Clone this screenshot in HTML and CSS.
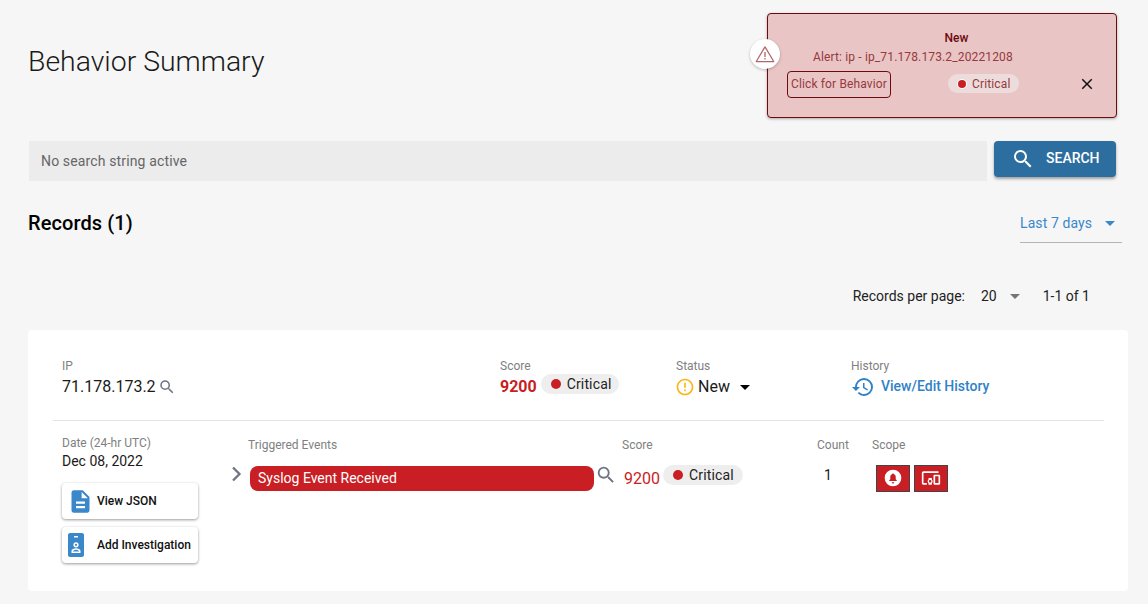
FILE: index.html
```html
<!DOCTYPE html>
<html lang="en">
<head>
<meta charset="utf-8">
<title>Behavior Summary</title>
<link rel="stylesheet" href="styles.css">
</head>
<body>
<main class="page">
  <h1 class="title">Behavior Summary</h1>

  <div class="search-row">
    <div class="search-field">No search string active</div>
    <button class="search-btn">
      <svg class="search-btn-icon" viewBox="0 0 24 24"><path d="M15.5 14h-.79l-.28-.27A6.47 6.47 0 0 0 16 9.5 6.5 6.5 0 1 0 9.5 16c1.61 0 3.09-.59 4.23-1.57l.27.28v.79l5 4.99L20.49 19l-4.99-5zm-6 0C7.01 14 5 11.99 5 9.5S7.01 5 9.5 5 14 7.01 14 9.5 11.99 14 9.5 14z"/></svg>
      <span>SEARCH</span>
    </button>
  </div>

  <div class="records-head">
    <h2 class="records-title">Records (1)</h2>
    <div class="range-select">
      <span>Last 7 days</span>
      <i class="caret caret-blue"></i>
    </div>
  </div>

  <div class="pager">
    <span>Records per page:</span>
    <span class="pager-num">20</span>
    <i class="caret caret-grey"></i>
    <span class="pager-range">1-1 of 1</span>
  </div>

  <section class="card">
    <div class="summary">
      <div class="cell">
        <div class="label">IP</div>
        <div class="value">71.178.173.2
          <svg class="mag mag-sm" viewBox="0 0 24 24"><path d="M15.5 14h-.79l-.28-.27A6.47 6.47 0 0 0 16 9.5 6.5 6.5 0 1 0 9.5 16c1.61 0 3.09-.59 4.23-1.57l.27.28v.79l5 4.99L20.49 19l-4.99-5zm-6 0C7.01 14 5 11.99 5 9.5S7.01 5 9.5 5 14 7.01 14 9.5 11.99 14 9.5 14z"/></svg>
        </div>
      </div>
      <div class="cell">
        <div class="label">Score</div>
        <div class="value">
          <strong class="score">9200</strong>
          <span class="chip"><i class="dot"></i>Critical</span>
        </div>
      </div>
      <div class="cell">
        <div class="label">Status</div>
        <div class="value status">
          <svg class="status-icon" viewBox="0 0 24 24"><path d="M11 15h2v2h-2zm0-8h2v6h-2zm.99-5C6.47 2 2 6.48 2 12s4.47 10 9.99 10C17.52 22 22 17.52 22 12S17.52 2 11.99 2zM12 20c-4.42 0-8-3.58-8-8s3.58-8 8-8 8 3.58 8 8-3.58 8-8 8z"/></svg>
          <span>New</span>
          <i class="caret caret-black"></i>
        </div>
      </div>
      <div class="cell">
        <div class="label">History</div>
        <div class="value history">
          <svg class="history-icon" viewBox="0 0 24 24"><path d="M13 3a9 9 0 0 0-9 9H1l3.89 3.89.07.14L9 12H6c0-3.87 3.13-7 7-7s7 3.13 7 7-3.13 7-7 7c-1.93 0-3.68-.79-4.94-2.06l-1.42 1.42A8.954 8.954 0 0 0 13 21a9 9 0 0 0 0-18zm-1 5v5l4.28 2.54.72-1.21-3.5-2.08V8H12z"/></svg>
          <span class="history-text">View/Edit History</span>
        </div>
      </div>
    </div>

    <div class="detail">
      <div class="date-col">
        <div class="label">Date (24-hr UTC)</div>
        <div class="date">Dec 08, 2022</div>
        <button class="action action-first">
          <svg class="action-icon icon-doc" viewBox="0 0 24 24"><path d="M14 2H6c-1.1 0-2 .9-2 2v16c0 1.1.9 2 2 2h12c1.1 0 2-.9 2-2V8l-6-6zm2 16H8v-2h8v2zm0-4H8v-2h8v2zm-3-5V3.500L18.500 9H13z"/></svg>
          <span class="action-text-doc">View JSON</span>
        </button>
        <button class="action">
          <svg class="action-icon icon-badge" viewBox="0 0 24 24"><path fill-rule="evenodd" d="M6 0h12c1.100 0 2 .9 2 2v20c0 1.100-.9 2-2 2H6c-1.100 0-2-.9-2-2V2c0-1.100.9-2 2-2zm4 3v1.400h4V3h-4zm2 6.200a2.600 2.600 0 1 0 0 5.200a2.600 2.600 0 0 0 0-5.200zm0 1.500a1.100 1.100 0 1 1 0 2.200a1.100 1.100 0 0 1 0-2.200zM7.500 20h9v-2c0-1.800-2.800-2.700-4.500-2.700s-4.500.9-4.500 2.700v2zm1.600-1.500v-.5c.4-.6 1.800-1.200 2.900-1.200s2.500.6 2.900 1.200v.5H9.100z"/></svg>
          <span class="action-text-badge">Add Investigation</span>
        </button>
      </div>

      <div class="events">
        <div class="events-head">
          <div class="label">Triggered Events</div>
          <div class="label">Score</div>
          <div class="label label-count">Count</div>
          <div class="label">Scope</div>
        </div>
        <div class="event-row">
          <svg class="chevron" viewBox="0 0 12 16"><path d="M2 1.500 8.500 8 2 14.500" fill="none" stroke="#6f7484" stroke-width="2.300"/></svg>
          <div class="event-pill">Syslog Event Received</div>
          <svg class="mag mag-lg" viewBox="0 0 24 24"><path d="M15.500 14h-.79l-.28-.27A6.470 6.470 0 0 0 16 9.500 6.500 6.500 0 1 0 9.500 16c1.610 0 3.090-.59 4.230-1.570l.27.28v.79l5 4.990L20.490 19l-4.990-5zm-6 0C7.010 14 5 11.990 5 9.500S7.010 5 9.500 5 14 7.010 14 9.500 11.990 14 9.500 14z"/></svg>
          <span class="event-score">9200</span>
          <span class="chip chip-event"><i class="dot"></i>Critical</span>
          <span class="event-count">1</span>
          <span class="scope-box scope-first">
            <svg class="scope-icon" viewBox="0 0 24 24"><path fill-rule="evenodd" d="M12 2a10 10 0 1 1 0 20a10 10 0 0 1 0-20zm0 16.500c.800 0 1.500-.7 1.500-1.500h-3c0 .8.700 1.500 1.500 1.500zm4.500-3v-.7l-1.200-1.200v-2.800c0-1.800-1-3.100-2.600-3.500v-.4a.7.7 0 0 0-1.400 0v.4c-1.600.4-2.600 1.700-2.600 3.500v2.800l-1.200 1.200v.7h9z"/></svg>
          </span>
          <span class="scope-box">
            <svg class="scope-icon" viewBox="0 0 24 24"><path d="M3 6h18V4H3c-1.100 0-2 .9-2 2v12c0 1.100.9 2 2 2h4v-2H3V6zm10 6H9v1.780c-.61.55-1 1.330-1 2.220s.39 1.670 1 2.220V20h4v-1.780c.61-.55 1-1.340 1-2.220s-.39-1.670-1-2.220V12zm-2 5.500c-.83 0-1.500-.67-1.500-1.500s.67-1.500 1.500-1.500 1.500.67 1.500 1.500-.67 1.500-1.500 1.500zM22 8h-6c-.5 0-1 .5-1 1v10c0 .5.5 1 1 1h6c.5 0 1-.5 1-1V9c0-.5-.5-1-1-1zm-1 10h-4v-8h4v8z"/></svg>
          </span>
        </div>
      </div>
    </div>
  </section>
</main>

<aside class="toast">
  <span class="toast-badge">
    <svg class="toast-warn" viewBox="0 0 24 24"><path class="toast-warn-line" d="M12 3.500 22.500 21h-21z"/><path class="toast-warn-mark" d="M11.200 9.500h1.600v6h-1.600zm0 7.300h1.600v1.700h-1.600z"/></svg>
  </span>
  <div class="toast-title">New</div>
  <div class="toast-msg">Alert: ip - ip_71.178.173.2_20221208</div>
  <div class="toast-actions">
    <span class="toast-link">Click for Behavior</span>
    <span class="chip chip-toast"><i class="dot dot-ring"></i>Critical</span>
    <svg class="toast-close" viewBox="0 0 24 24"><path d="M19 6.410 17.590 5 12 10.590 6.410 5 5 6.410 10.590 12 5 17.590 6.410 19 12 13.410 17.590 19 19 17.590 13.410 12z"/></svg>
  </div>
</aside>
</body>
</html>
```

FILE: styles.css
```css
* { box-sizing: border-box; }
html, body { margin: 0; height: 100%; }
body {
  background: #f6f6f6;
  color: #000;
  font-family: Roboto, "Liberation Sans", sans-serif;
  overflow: hidden;
  position: relative;
}
.page { padding: 44px 20px 0 28px; }
.title {
  margin: 0;
  font-size: 28.4px;
  font-weight: 300;
  line-height: 36px;
  color: #1a1a1a;
}
.search-row { display: flex; gap: 7px; margin-top: 61px; padding-left: 1px; padding-right: 12px; align-items: flex-start; }
.search-field {
  flex: 1;
  height: 40px;
  background: #ececec;
  color: #666;
  font-size: 14px;
  line-height: 40px;
  padding-left: 12px;
  letter-spacing: .14px;
}
.search-btn {
  width: 122px;
  height: 36px;
  display: flex;
  align-items: center;
  padding: 0 0 0 17px;
  gap: 12px;
  background: #2c6e9f;
  color: #fff;
  border: 0;
  border-radius: 4px;
  font: 500 14px Roboto, sans-serif;
  box-shadow: 0 2px 3px rgba(0,0,0,.35);
}
.search-btn span { margin: -2px 0 0 -1px; }
.search-btn-icon { width: 24px; height: 24px; fill: #fff; }
.records-head { display: flex; justify-content: space-between; margin-top: 24px; height: 38px; padding-right: 6px; }
.records-title { margin: 0; font-size: 20px; font-weight: 500; line-height: 36px; letter-spacing: .1px; }
.range-select {
  width: 102px;
  height: 38px;
  display: flex;
  align-items: center;
  justify-content: space-between;
  color: #3a87c9;
  font-size: 14px;
  border-bottom: 1px solid #b5b5b5;
  padding: 0 7px 1px 0;
  letter-spacing: .1px;
}
.caret { display: inline-block; width: 0; height: 0; border-left: 5px solid transparent; border-right: 5px solid transparent; border-top: 5px solid; }
.caret-blue { color: #3a87c9; }
.caret-grey { color: #757575; margin-left: 13px; }
.caret-black { color: #000; margin-left: 10px; }
.pager { display: flex; align-items: center; height: 20px; margin-top: 43px; padding-right: 38px; justify-content: flex-end; font-size: 14px; color: #222; }
.pager-num { margin-left: 16px; }
.pager-range { margin-left: 23px; }
.card { background: #fff; border-radius: 4px; margin-top: 24px; height: 261px; padding: 0 24px 0 25px; }
.summary {
  display: grid;
  grid-template-columns: 438px 176px 175px 1fr;
  padding: 29px 0 0 9px;
  height: 91px;
  border-bottom: 1px solid #e4e4e4;
}
.label { font-size: 12px; line-height: 14px; color: #808080; }
.value { display: flex; align-items: center; font-size: 16px; line-height: 20px; height: 24px; margin-top: 2px; color: #1a1a1a; }
.mag { fill: #6f7484; flex: none; }
.mag-sm { width: 18px; height: 18px; margin-left: 2px; }
.mag-lg { width: 22px; height: 22px; margin: -7px 0 0 1px; }
.score { color: #c81e24; font-weight: 700; font-size: 16px; }
.chip {
  display: inline-flex;
  align-items: center;
  height: 20px;
  border-radius: 10px;
  background: #eeeeee;
  font-size: 14px;
  letter-spacing: .14px;
  color: #222;
  padding: 0 8px 0 10px;
  margin: -6px 0 0 4px;
}
.dot { width: 10px; height: 10px; border-radius: 50%; background: #c81e24; margin-right: 6px; flex: none; }
.status span { margin-left: 3px; }
.status-icon { width: 20px; height: 20px; fill: #fdb515; flex: none; margin-left: -1px; }
.history { color: #2f82c8; font-size: 14px; font-weight: 500; }
.history-icon { width: 24px; height: 24px; fill: #2f82c8; margin: 0 6px 0 0; flex: none; }
.history-text { margin-top: -2px; }
.detail { display: flex; padding: 15px 0 0 9px; }
.date-col { width: 186px; flex: none; }
.date { font-size: 14px; line-height: 20px; margin-top: 1px; color: #1a1a1a; }
.action {
  width: 136px;
  height: 36px;
  display: flex;
  align-items: center;
  background: #fff;
  border: 0;
  border-radius: 4px;
  margin-top: 8px;
  padding: 0;
  font: 500 12px Roboto, sans-serif;
  color: #111;
  box-shadow: 0 1px 3px rgba(0,0,0,.4);
}
.action-first { margin-top: 12px; }
.action-icon { fill: #3a87c9; flex: none; }
.icon-doc { width: 27px; height: 27px; margin-left: 4.500px; }
.icon-badge { width: 24px; height: 24px; margin-left: 2px; }
.action-text-doc { margin-left: 3.500px; }
.action-text-badge { margin-left: 9px; }
.events { flex: 1; margin-top: 2px; }
.events-head { display: grid; grid-template-columns: 374px 195px 55px 1fr; }
.label-count { white-space: nowrap; }
.event-row { display: flex; align-items: center; margin-top: 12px; margin-left: -17px; height: 28px; }
.chevron { width: 12px; height: 16px; flex: none; margin: -9px 7px 0 0; }
.event-pill {
  width: 344px;
  height: 25px;
  border-radius: 8px;
  background: #c81e24;
  color: #fff;
  font-size: 14px;
  line-height: 25px;
  padding-left: 8px;
  flex: none;
}
.event-score { color: #c81e24; font-size: 16px; margin-left: 7px; width: 36px; }
.chip-event { margin-left: 3px; width: 80px; }
.event-count { font-size: 14px; margin-left: 81px; width: 8px; margin-top: -6px; color: #1a1a1a; }
.scope-box { width: 34px; height: 27px; background: #c81e24; border: 1px solid #444; display: flex; align-items: center; justify-content: center; flex: none; margin-left: 4px; }
.scope-first { margin-left: 44px; }
.scope-icon { width: 20px; height: 20px; fill: #fff; }
.toast {
  position: absolute;
  left: 767px;
  top: 13px;
  width: 350px;
  height: 105px;
  background: #e9c5c5;
  border: 1px solid #6d0a0e;
  border-radius: 4px;
  box-shadow: 0 1px 3px rgba(0,0,0,.3);
  padding: 17px 19px 0;
  color: #97393d;
  font-size: 12px;
  letter-spacing: .14px;
}
.toast-badge {
  position: absolute;
  left: -18px;
  top: 25px;
  width: 30px;
  height: 30px;
  border-radius: 50%;
  background: #fff;
  box-shadow: 0 1px 3px rgba(0,0,0,.25);
  display: flex;
  align-items: center;
  justify-content: center;
}
.toast-warn { width: 20px; height: 20px; }
.toast-warn-line { fill: none; stroke: #b0666a; stroke-width: 1.500; stroke-linejoin: round; }
.toast-warn-mark { fill: #b0666a; }
.toast-title { font-weight: 500; color: #6d0a0e; text-align: center; line-height: 14px; padding-left: 29px; letter-spacing: 0; }
.toast-msg { line-height: 14px; margin-top: 5px; padding-left: 26px; }
.toast-actions { display: flex; align-items: flex-start; margin-top: 7px; }
.toast-link { height: 27px; width: 104px; border: 1px solid #6d0a0e; border-radius: 4px; line-height: 25px; text-align: center; white-space: nowrap; }
.chip-toast { background: #ecdcdc; color: #97393d; font-size: 12px; height: 19px; width: 71px; margin: 3px 0 0 57px; padding: 0 0 0 10px; }
.dot-ring { width: 8px; height: 8px; box-shadow: 0 0 0 1px #fff; }
.toast-close { width: 18px; height: 18px; fill: #111; margin: 4px 0 0 59px; }
```
